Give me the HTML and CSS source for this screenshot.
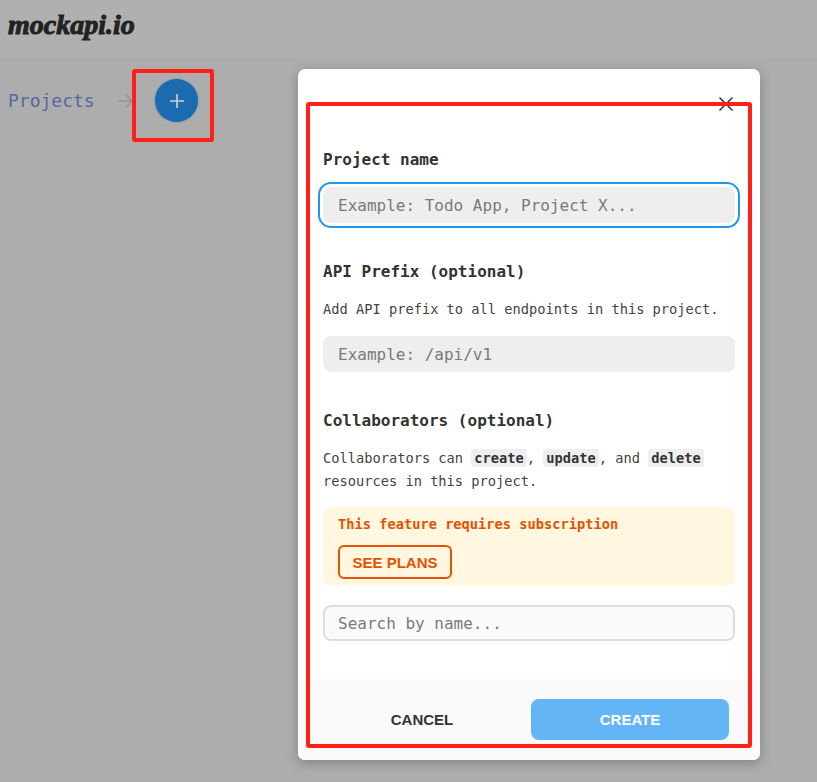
FILE: index.html
```html
<!DOCTYPE html>
<html lang="en">

<head>
    <meta charset="UTF-8">
    <meta name="viewport" content="width=device-width, initial-scale=1.0">
    <title>mockapi.io</title>
    <link rel="stylesheet" href="styles.css">
</head>

<body>
    <header class="topbar">
        <span class="logo">mockapi.io</span>
    </header>
    <div class="crumbs">
        <a class="crumb-link">Projects</a>
        <svg class="crumb-arrow" width="18" height="16" viewBox="0 0 18 16">
            <path d="M2 8H16M9.500 1.500L16 8L9.500 14.500" fill="none" stroke="#969696" stroke-width="1.500"/>
        </svg>
        <button class="add-btn">
            <svg width="16" height="16" viewBox="0 0 16 16">
                <path d="M8 1V15M1 8H15" stroke="#cfcfcf" stroke-width="1.600"/>
            </svg>
        </button>
    </div>

    <div class="modal">
        <svg class="modal-close" width="16" height="16" viewBox="0 0 16 16">
            <path d="M1.500 1.500L14.500 14.500M14.500 1.500L1.500 14.500" stroke="#333" stroke-width="1.500"/>
        </svg>
        <div class="modal-body">
            <div class="field field-first">
                <label class="field-label">Project name</label>
                <div class="focus-ring">
                    <input class="input" type="text" placeholder="Example: Todo App, Project X...">
                </div>
            </div>
            <div class="field field-api">
                <label class="field-label">API Prefix (optional)</label>
                <p class="hint">Add API prefix to all endpoints in this project.</p>
                <input class="input" type="text" placeholder="Example: /api/v1">
            </div>
            <div class="field field-collab">
                <label class="field-label">Collaborators (optional)</label>
                <p class="hint">Collaborators can <code>create</code>, <code>update</code>, and <code>delete</code> resources in this project.</p>
                <div class="notice">
                    <p class="notice-text">This feature requires subscription</p>
                    <button class="btn-plans">SEE PLANS</button>
                </div>
                <input class="input input-search" type="text" placeholder="Search by name...">
            </div>
        </div>
        <div class="modal-footer">
            <button class="btn-cancel">CANCEL</button>
            <button class="btn-create">CREATE</button>
        </div>
    </div>

    <!-- red marks drawn over the screenshot -->
    <div class="mark mark-add"></div>
    <div class="mark mark-modal"></div>
</body>

</html>
```

FILE: styles.css
```css
* {
    margin: 0;
    padding: 0;
    box-sizing: border-box;
}

body {
    width: 100%;
    height: 782px;
    overflow: hidden;
    background: #adadad;
    font-family: "DejaVu Sans Mono", "Liberation Mono", monospace;
    color: #333;
    position: relative;
}

.topbar {
    height: 57px;
    background: #b0b0b0;
    padding: 0 8px;
}

.logo {
    display: block;
    font-family: "Liberation Serif", serif;
    font-style: italic;
    font-weight: bold;
    font-size: 28px;
    line-height: 50px;
    color: #222;
    -webkit-text-stroke: 1px #222;
}

.crumbs {
    display: flex;
    align-items: center;
    height: 43px;
    margin-top: 22px;
    padding-left: 8px;
}

.crumb-link {
    font-size: 18px;
    width: 108px;
    color: #52699f;
}

.crumb-arrow {
    margin-right: 21px;
}

.add-btn {
    width: 43px;
    height: 43px;
    border: none;
    border-radius: 50%;
    background: #1a6bb0;
    box-shadow: 0 0 2px rgba(26, 107, 176, 0.6);
    display: flex;
    align-items: center;
    justify-content: center;
}

.modal {
    position: absolute;
    left: 298px;
    top: 69px;
    width: 462px;
    height: 691px;
    background: #fff;
    border-radius: 7px;
    box-shadow: 0 3px 12px rgba(0, 0, 0, 0.25);
    display: flex;
    flex-direction: column;
    overflow: hidden;
}

.modal-close {
    position: absolute;
    right: 26px;
    top: 27px;
}

.modal-body {
    flex: 1;
    padding: 0 25px;
}

.field-first {
    padding-top: 80px;
}

.field-api {
    padding-top: 33px;
}

.field-collab {
    padding-top: 38px;
}

.field-label {
    display: block;
    font-size: 16px;
    font-weight: bold;
    line-height: 22px;
}

.focus-ring {
    margin: 11px -5px 0;
    padding: 3px;
    border: 2px solid #2196f3;
    border-radius: 13px;
}

.input {
    display: block;
    width: 100%;
    height: 36px;
    padding: 0 15px;
    border: none;
    outline: none;
    border-radius: 8px;
    background: #eee;
    font-family: inherit;
    font-size: 16px;
    color: #333;
}

.input::placeholder {
    color: #7a7a7a;
    opacity: 1;
}

.hint {
    margin-top: 15px;
    font-size: 13.700px;
    line-height: 23px;
    color: #444;
}

.field-api .input {
    margin-top: 15px;
}

.hint code {
    font-family: inherit;
    font-weight: bold;
    color: #333;
    background: #eee;
    border-radius: 3px;
    padding: 1px 3px;
}

.notice {
    margin-top: 14px;
    height: 79px;
    padding: 9px 15px;
    border-radius: 8px;
    background: #fff7df;
}

.notice-text {
    font-size: 13.700px;
    font-weight: bold;
    line-height: 17px;
    color: #e65100;
}

.btn-plans {
    display: block;
    margin-top: 12px;
    width: 114px;
    height: 34px;
    border: 2px solid #e65100;
    border-radius: 6px;
    background: transparent;
    font-family: "Liberation Sans", Arial, sans-serif;
    font-size: 15px;
    font-weight: bold;
    color: #e65100;
}

.input-search {
    margin-top: 19px;
    background: #fafafa;
    border: 2px solid #ddd;
    padding: 0 13px;
}

.modal-footer {
    height: 81px;
    flex-shrink: 0;
    background: #fafafa;
    display: flex;
    align-items: center;
    padding: 0 31px 0 25px;
    justify-content: space-between;
}

.btn-cancel,
.btn-create {
    height: 41px;
    border: none;
    border-radius: 8px;
    font-family: "Liberation Sans", Arial, sans-serif;
    font-size: 15px;
    font-weight: bold;
}

.btn-cancel {
    width: 198px;
    background: transparent;
    color: #333;
}

.btn-create {
    width: 198px;
    background: #64b5f6;
    color: #fff;
}

.mark {
    position: absolute;
    border: 4px solid #ff2016;
    border-radius: 3px;
}

.mark-add {
    left: 132px;
    top: 69px;
    width: 82px;
    height: 73px;
}

.mark-modal {
    left: 306px;
    top: 102px;
    width: 446px;
    height: 646px;
}
```
